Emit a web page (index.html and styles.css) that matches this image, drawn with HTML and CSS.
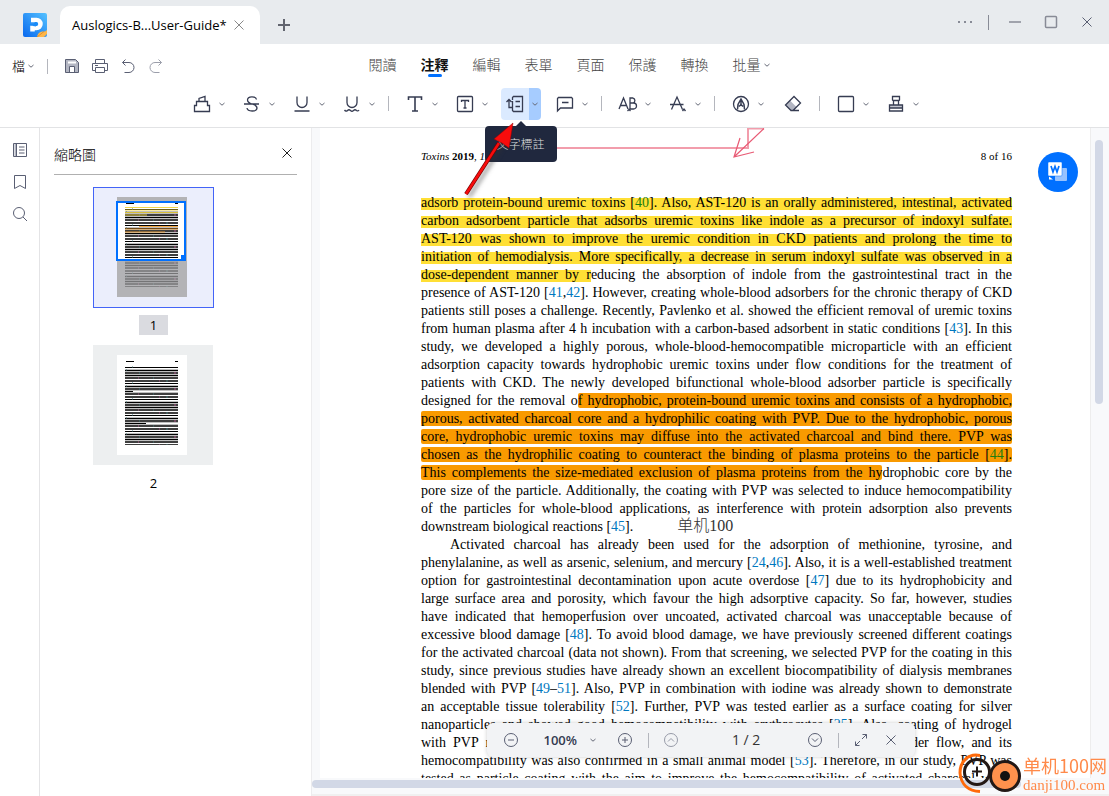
FILE: index.html
```html
<!DOCTYPE html>
<html lang="zh-Hant">
<head>
<meta charset="utf-8">
<title>Auslogics-B...User-Guide*</title>
<link rel="stylesheet" href="styles.css">
</head>
<body>
<svg class="defs" width="0" height="0" aria-hidden="true">
  <defs>
    <symbol id="chev" viewBox="0 0 12 12"><path d="M3.5 5 6 7.2 8.500 5"/></symbol>
    <symbol id="cross" viewBox="0 0 16 16"><path d="M3.500 3.500 12.500 12.500M12.500 3.500 3.500 12.500"/></symbol>
    <pattern id="rows" width="53" height="16" patternUnits="userSpaceOnUse">
      <path d="M0 1h53M0 4h53M0 9.500h53M0 12h53M0 14.500h53" stroke="#000" stroke-width="1.600"/>
      <path d="M0 6.500h53" stroke="#000"/>
      <path d="M7 1h1M20 4h2M33 9h1M46 12h1M39 6h1" stroke="#477"/>
      <path d="M13 4h1M28 12h2M45 1h1" stroke="#a58"/>
    </pattern>
  </defs>
</svg>

<div class="app">
  <header class="titlebar">
    <svg class="logo" viewBox="0 0 24 24">
      <defs><linearGradient id="lg" x1="1" y1="0" x2="0" y2="1"><stop offset="0" stop-color="#55c2ff"/><stop offset="1" stop-color="#0868ee"/></linearGradient></defs>
      <rect width="24" height="24" rx="2" fill="url(#lg)"/>
      <path d="M8 7h5.500a3.800 3.800 0 0 1 0 8H9.500v3.500" fill="none" stroke="#fff" stroke-width="4.500"/>
      <path d="M5 11.500h5l3-2v3.500L10 12.500" fill="#1a8cf8" stroke="#1a8cf8"/>
      <circle cx="13" cy="11" r="2" fill="#1a8cf8"/>
      <path d="M14 24c1-5 4-6 8-5.500L24 17v4l-3 3z" fill="#ffb648"/><path d="M14 24 21 18.500" stroke="#d8852a" stroke-width=".8"/>
    </svg>
    <div class="doc-tab"><span>Auslogics-B...User-Guide*</span><button class="ib" aria-label="Close tab"><svg class="i16 faint"><use href="#cross"/></svg></button></div>
    <button class="ib add" aria-label="New tab"><svg class="i16 bold" viewBox="0 0 16 16"><path d="M8 2v12M2 8h12"/></svg></button>
    <div class="win">
      <button class="ib" aria-label="More"><svg class="i16 fillonly" viewBox="0 0 16 16"><path d="M1 7h2v2H1zM7 7h2v2H7zM13 7h2v2h-2z"/></svg></button>
      <i class="sep"></i>
      <button class="ib" aria-label="Minimize"><svg class="i16 gray" viewBox="0 0 16 16"><path d="M2 8h12"/></svg></button>
      <button class="ib" aria-label="Maximize"><svg class="i16 gray" viewBox="0 0 16 16"><rect x="2.500" y="2.500" width="11" height="11" rx="1"/></svg></button>
      <button class="ib" aria-label="Close"><svg class="i16"><use href="#cross"/></svg></button>
    </div>
  </header>

  <div class="menubar">
    <div class="quick">
      <button class="file">檔<svg class="chev"><use href="#chev"/></svg></button>
      <i class="sep"></i>
      <button class="ib" aria-label="Save"><svg class="i16" viewBox="0 0 16 16"><path d="M1.500 1.500h10l3 3v10h-13z" fill="#b3b6c2"/><path d="M4 4.500h8" stroke="#fff" stroke-width="2"/><path d="M5.500 14V8.500h5V14" fill="#fff"/></svg></button>
      <button class="ib" aria-label="Print"><svg class="i16" viewBox="0 0 16 16"><path d="M3.500 5V1.500h9V5M3.500 12.500H.5v-7h15v7h-3M3.500 9.500h9v5h-9zM3 7.500h3"/></svg></button>
      <button class="ib" aria-label="Undo"><svg class="i16" viewBox="0 0 16 16"><path d="M5.500 1.500 2.500 4.500l3 3M2.500 4.500h6.500a5 5 0 0 1 0 10H4.500"/></svg></button>
      <button class="ib dim" aria-label="Redo"><svg class="i16" viewBox="0 0 16 16"><path d="M10.500 1.500 13.500 4.500l-3 3M13.500 4.500H7a5 5 0 0 0 0 10h4.500"/></svg></button>
    </div>
    <nav class="tabs">
      <button>閱讀</button><button class="active">注釋</button><button>編輯</button><button>表單</button><button>頁面</button><button>保護</button><button>轉換</button><button>批量<svg class="chev"><use href="#chev"/></svg></button>
    </nav>
  </div>

  <div class="toolbar">
    <div class="group">
      <button class="tool" aria-label="Highlight"><svg class="i18" viewBox="0 0 18 18"><path d="M1.500 16.500v-6h2v-4h11v4h2v6zM6 6.500V3.500L12 1.500v5"/></svg><svg class="chev"><use href="#chev"/></svg></button>
      <button class="tool" aria-label="Strikethrough"><svg class="i18" viewBox="0 0 18 18"><path d="M13.500 4.500C13 1 4.500.8 4.500 5 4.500 7 6 8 9 9c4 1.200 5 2.200 5 4 0 4-9.500 4-10 0M1 9h15"/></svg><svg class="chev"><use href="#chev"/></svg></button>
      <button class="tool" aria-label="Underline"><svg class="i18" viewBox="0 0 18 18"><path d="M4 1.500v6a5 5 0 0 0 10 0v-6M1.500 16h15"/></svg><svg class="chev"><use href="#chev"/></svg></button>
      <button class="tool" aria-label="Squiggly underline"><svg class="i18" viewBox="0 0 18 18"><path d="M4 1.500v6a5 5 0 0 0 10 0v-6M1.500 15q1.500 2 3 .5 1.500-1.500 3 0 1.500 1.500 3 0 1.500-1.500 3 0 1.500 1 2.500-.5"/></svg><svg class="chev"><use href="#chev"/></svg></button>
    </div>
    <i class="sep"></i>
    <div class="group">
      <button class="tool" aria-label="Typewriter"><svg class="i18" viewBox="0 0 18 18"><path d="M2.500 5V2h13v3M9 2v14M6 16h6" stroke-width="1.600"/></svg><svg class="chev"><use href="#chev"/></svg></button>
      <button class="tool" aria-label="Text box"><svg class="i18" viewBox="0 0 18 18"><rect x="1.500" y="1.500" width="15" height="15" rx="1"/><path d="M5.500 7V5.500h7V7M9 5.500V13M7.500 13h3"/></svg><svg class="chev"><use href="#chev"/></svg></button>
      <div class="anchor">
        <button class="tool selected" aria-label="Text callout"><svg class="i18" viewBox="0 0 18 18"><path d="M.5 7 3 4.500 5.500 7M3 4.500v8h3M6.500 5V2.500l1-1h9v15h-9l-1-1V6M9.500 6.500H14M9.500 11.500H14"/></svg><svg class="chev"><use href="#chev"/></svg></button>
        <div class="tooltip" role="tooltip">文字標註</div>
        <svg class="pointer" viewBox="0 0 60 90" aria-hidden="true"><path d="m9 82 36-56" stroke="#333" stroke-opacity=".45" stroke-width="4" filter="blur(2px)"/><path d="m6 79 33-51" stroke="#700" stroke-width="4"/><path d="m6 79 33-51" stroke="#f80c0c" stroke-width="2.500"/><path d="M53 8 49 33 42 28 34 24z" fill="#f80c0c" stroke="#900" stroke-width=".5"/></svg>
      </div>
      <button class="tool" aria-label="Note"><svg class="i18" viewBox="0 0 18 18"><path d="M1.500 16V3.500l1-1h13l1 1v9.500h-12zM6 7.500h6.500"/></svg><svg class="chev"><use href="#chev"/></svg></button>
    </div>
    <i class="sep"></i>
    <div class="group">
      <button class="tool" aria-label="Replace text"><svg class="i20" viewBox="0 0 20 18"><path d="m1 14 4.500-11L10 14M2.500 10.500h6M12 3h3a2.600 2.600 0 0 1 0 5h-3zM12 8h3.500a3 3 0 0 1 0 6H12zM9.500 16l1.500-1.500L12.500 16"/></svg><svg class="chev"><use href="#chev"/></svg></button>
      <button class="tool" aria-label="Insert text"><svg class="i18" viewBox="0 0 18 18"><path d="M2.500 14.500 8 2l5.500 12.500M1 9.500h13.500M13.500 16l1.500-2 1.500 2"/></svg><svg class="chev"><use href="#chev"/></svg></button>
    </div>
    <i class="sep"></i>
    <div class="group wide">
      <button class="tool" aria-label="Ink"><svg class="i18" viewBox="0 0 18 18"><circle cx="9" cy="9" r="7.500"/><path d="M5.500 14.500 6 9.500 9 4l3 5.500.500 5M9 5v5M7 11.500l2-2 2 2" stroke-width="1.500"/></svg><svg class="chev"><use href="#chev"/></svg></button>
      <button class="tool single" aria-label="Eraser"><svg class="i18" viewBox="0 0 18 18"><path d="M6 5.500 12.500 12 9 15.500H6.500L1.500 10z" fill="#b3b6c2" stroke="none"/><path d="M7 15.500 1.500 10 10 1.500 16.500 8 9 15.500M6.500 15.500H15"/></svg></button>
    </div>
    <i class="sep"></i>
    <div class="group">
      <button class="tool" aria-label="Rectangle"><svg class="i18" viewBox="0 0 18 18"><rect x="1.500" y="1.500" width="15" height="15" rx="1"/></svg><svg class="chev"><use href="#chev"/></svg></button>
      <button class="tool" aria-label="Stamp"><svg class="i18" viewBox="0 0 18 18"><path d="M2 10h14v3H2z" fill="#c3c5cf" stroke="none"/><path d="M2.500 16v-6h13v6zM6.500 9.500V6l-1-1V1.500h7V5l-1 1v3.500M6 5.500h6M2.500 13h13"/></svg><svg class="chev"><use href="#chev"/></svg></button>
    </div>
  </div>

  <main class="body">
    <aside class="rail">
      <button class="ib" aria-label="Thumbnails"><svg class="i16" viewBox="0 0 16 16"><path d="M3.500 2v12" stroke="#b3b6c2" stroke-width="2"/><path d="M1.500 1.500h13v13h-13zM4.500 2v12M7 5h5.500M7 8h5.500M7 11h5.500"/></svg></button>
      <button class="ib" aria-label="Bookmarks"><svg class="i16" viewBox="0 0 16 16"><path d="M2.500 1.500h11v13L8 11.500l-5.500 3z"/></svg></button>
      <button class="ib" aria-label="Search"><svg class="i16" viewBox="0 0 16 16"><circle cx="7" cy="7" r="5.500"/><path d="m11 11 4 4"/></svg></button>
    </aside>

    <section class="thumbs">
      <div class="thumbs-head"><h2>縮略圖</h2><button class="ib" aria-label="Close panel"><svg class="i16 dark"><use href="#cross"/></svg></button></div>
      <ol class="thumb-list">
        <li class="current">
          <svg class="thumb" viewBox="0 0 121 121">
            <rect x=".5" y=".5" width="120" height="120" fill="#ebeefc" stroke="#4364f7"/>
            <rect x="24" y="10" width="70" height="100" fill="#b3b3b6"/>
            <rect x="24" y="15" width="68" height="58" fill="#fff"/>
            <path d="M33 16.500h8M82 16.500h3" stroke="#000" stroke-width="1.200"/>
            <rect x="32" y="21" width="53" height="50" fill="url(#rows)"/>
            <path d="M32 20.500h53M32 23h53M32 25.500h53M32 28h22" stroke="#efd23a" stroke-width=".9"/>
            <path d="M46 39.500h39M32 42h53M32 45h40" stroke="#f5a030" stroke-width=".9"/>
            <rect x="32" y="74" width="53" height="26" fill="url(#rows)" opacity=".35"/>
            <rect x="24" y="15" width="68" height="58" fill="none" stroke="#0070ff" stroke-width="2"/>
            <path d="M88 68h4v5h-4z" fill="#0070ff"/>
          </svg>
          <span>1</span>
        </li>
        <li>
          <svg class="thumb" viewBox="0 0 121 121">
            <rect width="120" height="120" fill="#edeff0"/>
            <rect x="24" y="10" width="70" height="100" fill="#fff"/>
            <path d="M33 16.500h8M82 16.500h3" stroke="#000" stroke-width="1.200"/>
            <rect x="32" y="21" width="53" height="79" fill="url(#rows)"/>
            <path d="M40 46.500h45M53 78.500h32" stroke="#fff"/>
          </svg>
          <span>2</span>
        </li>
      </ol>
    </section>

    <section class="viewer">
      <article class="page">
        <div class="running"><span><em>Toxins</em> <b>2019</b>, <em>11</em></span><span>8 of 16</span></div>
        <svg class="ink" viewBox="0 0 260 34" aria-hidden="true"><path d="M0 20h242V.5h16" stroke="#f29dac" stroke-width="2"/><path d="M258 .5 228 29M234 10l-6 19 20-5" stroke="#e85a74" stroke-width="1.200"/></svg>
        <p><mark>adsorb protein-bound uremic toxins [<a class="g">40</a>]. Also, AST-120 is an orally administered, intestinal, activated</mark></p>
        <p><mark>carbon adsorbent particle that adsorbs uremic toxins like indole as a precursor of indoxyl sulfate.</mark></p>
        <p><mark>AST-120 was shown to improve the uremic condition in CKD patients and prolong the time to</mark></p>
        <p><mark>initiation of hemodialysis. More specifically, a decrease in serum indoxyl sulfate was observed in a</mark></p>
        <p><mark>dose-dependent manner by r</mark>educing the absorption of indole from the gastrointestinal tract in the</p>
        <p>presence of AST-120 [<a>41</a>,<a>42</a>]. However, creating whole-blood adsorbers for the chronic therapy of CKD</p>
        <p>patients still poses a challenge. Recently, Pavlenko et al. showed the efficient removal of uremic toxins</p>
        <p>from human plasma after 4 h incubation with a carbon-based adsorbent in static conditions [<a>43</a>]. In this</p>
        <p>study, we developed a highly porous, whole-blood-hemocompatible microparticle with an efficient</p>
        <p>adsorption capacity towards hydrophobic uremic toxins under flow conditions for the treatment of</p>
        <p>patients with CKD. The newly developed bifunctional whole-blood adsorber particle is specifically</p>
        <p>designed for the removal o<mark class="o">f hydrophobic, protein-bound uremic toxins and consists of a hydrophobic,</mark></p>
        <p><mark class="o">porous, activated charcoal core and a hydrophilic coating with PVP. Due to the hydrophobic, porous</mark></p>
        <p><mark class="o">core, hydrophobic uremic toxins may diffuse into the activated charcoal and bind there. PVP was</mark></p>
        <p><mark class="o">chosen as the hydrophilic coating to counteract the binding of plasma proteins to the particle [<a class="g">44</a>].</mark></p>
        <p><mark class="o">This complements the size-mediated exclusion of plasma proteins from the hy</mark>drophobic core by the</p>
        <p>pore size of the particle. Additionally, the coating with PVP was selected to induce hemocompatibility</p>
        <p>of the particles for whole-blood applications, as interference with protein adsorption also prevents</p>
        <p class="last"><span>downstream biological reactions [<a>45</a>].</span><span class="typed">单机100</span></p>
        <p class="indent">Activated charcoal has already been used for the adsorption of methionine, tyrosine, and</p>
        <p>phenylalanine, as well as arsenic, selenium, and mercury [<a>24</a>,<a>46</a>]. Also, it is a well-established treatment</p>
        <p>option for gastrointestinal decontamination upon acute overdose [<a>47</a>] due to its hydrophobicity and</p>
        <p>large surface area and porosity, which favour the high adsorptive capacity. So far, however, studies</p>
        <p>have indicated that hemoperfusion over uncoated, activated charcoal was unacceptable because of</p>
        <p>excessive blood damage [<a>48</a>]. To avoid blood damage, we have previously screened different coatings</p>
        <p>for the activated charcoal (data not shown). From that screening, we selected PVP for the coating in this</p>
        <p>study, since previous studies have already shown an excellent biocompatibility of dialysis membranes</p>
        <p>blended with PVP [<a>49</a>–<a>51</a>]. Also, PVP in combination with iodine was already shown to demonstrate</p>
        <p>an acceptable tissue tolerability [<a>52</a>]. Further, PVP was tested earlier as a surface coating for silver</p>
        <p>nanoparticles and showed good hemocompatibility with erythrocytes [<a>25</a>]. Also, coating of hydrogel</p>
        <p>with PVP resulted in an improved blood compatibility of the coated surfaces under flow, and its</p>
        <p>hemocompatibility was also confirmed in a small animal model [<a>53</a>]. Therefore, in our study, PVP was</p>
        <p>tested as particle coating with the aim to improve the hemocompatibility of activated charcoal while</p>
      </article>
      <div class="vscroll"><i></i></div>
      <div class="hscroll"><i></i></div>
      <button class="word" aria-label="Convert to Word"><svg viewBox="0 0 20 20"><rect x="7" y="6" width="12" height="13" rx="1" fill="#96c2ff"/><path d="M1 14.500v3h4z" fill="#fff"/><rect width="14" height="14" rx="1" fill="#fff" stroke="#0070ff" stroke-width=".5"/><path d="m3 4 2 6 2-5.500L9 10l2-6" fill="none" stroke="#0070ff" stroke-width="1.700"/></svg></button>
      <div class="pager">
        <button class="ib" aria-label="Zoom out"><svg class="i16" viewBox="0 0 16 16"><circle cx="8" cy="8" r="6.500"/><path d="M5 8h6"/></svg></button>
        <button class="zoom">100%<svg class="chev"><use href="#chev"/></svg></button>
        <button class="ib" aria-label="Zoom in"><svg class="i16" viewBox="0 0 16 16"><circle cx="8" cy="8" r="6.500"/><path d="M5 8h6M8 5v6"/></svg></button>
        <i class="sep"></i>
        <button class="ib dim" aria-label="Previous page"><svg class="i16" viewBox="0 0 16 16"><circle cx="8" cy="8" r="6.500"/><path d="m5 9.500 3-3 3 3"/></svg></button>
        <span class="count">1 / 2</span>
        <button class="ib" aria-label="Next page"><svg class="i16" viewBox="0 0 16 16"><circle cx="8" cy="8" r="6.500"/><path d="m5 6.500 3 3 3-3"/></svg></button>
        <i class="sep"></i>
        <button class="ib" aria-label="Fit"><svg class="i16" viewBox="0 0 16 16"><path d="M9.500 2.500h4v4M13.500 2.500 9 7M6.500 13.500h-4v-4M2.500 13.500 7 9"/></svg></button>
        <button class="ib" aria-label="Hide"><svg class="i16"><use href="#cross"/></svg></button>
      </div>
    </section>
  </main>
</div>

<div class="brand">
  <svg viewBox="0 0 64 42" aria-hidden="true" fill="none">
    <path d="M22 2.500C10 0 2 9 2 20c1 12 9 18 20 18.500" stroke="#ff6a0a" stroke-width="3"/>
    <circle cx="19" cy="19" r="12.500" stroke="#231815" stroke-width="3"/><path d="M19 13.500v10M14 18.500h10" stroke="#231815" stroke-width="2"/>
    <circle cx="47" cy="23" r="14.500" fill="#ff914d" stroke="#231815" stroke-width="3"/><circle cx="47" cy="23" r="5" fill="#111"/>
  </svg>
  <div><strong>单机100网</strong><span>danji100.com</span></div>
</div>
</body>
</html>
```
FILE: styles.css
```css
* { box-sizing: border-box; }
body { margin: 0; font: 13px/18px "Open Sans", "Noto Sans CJK TC", sans-serif; color: #222; background: #fff; overflow: hidden; }
h2, p, ol { margin: 0; padding: 0; }
button { font: inherit; color: inherit; background: none; border: 0; padding: 0; display: flex; align-items: center; justify-content: center; flex: none; }
svg { fill: none; stroke-width: 1; flex: none; display: block; }
.defs { position: absolute; }
.i16 { width: 16px; height: 16px; stroke: #5a5f73; }
.i18 { width: 18px; height: 18px; stroke: #363c52; stroke-width: 1.3; }
.i20 { width: 20px; height: 18px; stroke: #363c52; stroke-width: 1.3; }
.chev { width: 12px; height: 12px; stroke: #666a78; }
.ib { width: 16px; height: 16px; }
.dim { opacity: .6; }
.faint { stroke: #888; }
.dark { stroke: #222; }
.gray { stroke: #888b96; stroke-width: 1.5; }
.bold { stroke: #62656f; stroke-width: 2; }
.fillonly { fill: #888b96; stroke: none; }
.sep { width: 1px; height: 15px; background: #b4b6bd; flex: none; }

.app { height: 100vh; display: flex; flex-direction: column; }
.titlebar { height: 44px; background: #e8ebee; display: flex; align-items: center; padding: 6px 14px 0 23px; flex: none; }
.logo { width: 24px; height: 24px; margin-right: 13px; }
.doc-tab { width: 200px; height: 38px; background: #fff; border-radius: 10px 10px 0 0; display: flex; align-items: center; justify-content: space-between; padding: 0 13px 0 12px; color: #000; }
.add { margin-left: 16px; }
.win { margin-left: auto; display: flex; align-items: center; gap: 20px; height: 100%; padding-bottom: 6px; }
.win .sep { margin: 0 -2px 0 -5px; background: #888b96; }

.menubar { height: 44px; display: grid; grid-template-columns: 1fr auto 1fr; align-items: center; flex: none; }
.quick { display: flex; align-items: center; padding-left: 12px; gap: 12px; }
.quick .sep { margin-left: -2px; margin-right: 4px; }
.file { font-size: 13px; font-weight: 300; color: #000; }
.tabs { display: flex; gap: 24px; padding-left: 32px; font-size: 14px; line-height: 20px; padding-bottom: 2px; color: #444; font-weight: 300; }
.tabs .active { color: #111; font-weight: 700; position: relative; }
.tabs .active::after { content: ""; position: absolute; width: 14px; height: 3px; border-radius: 2px; background: #0070ff; bottom: -2px; left: 7px; }

.toolbar { height: 40px; display: flex; align-items: flex-start; justify-content: center; gap: 10px; flex: none; border-bottom: 1px solid #e2e3e5; }
.toolbar > .sep { margin: 8px 2px 0 0; }
.group { display: flex; gap: 10px; }
.group.wide { gap: 12px; padding-right: 2px; }
.tool { width: 40px; height: 32px; justify-content: flex-start; padding-left: 5px; border-radius: 4px; gap: 5px; }
.tool .i20 { margin: 0 -1px; }
.tool.single { width: 28px; }
.selected { background: linear-gradient(90deg, #dbeaff 28px, #a6ccff 28px); }
.anchor { position: relative; }
.tooltip { position: absolute; z-index: 3; left: -16px; top: 38px; width: 72px; height: 36px; border-radius: 4px; background: #20283e; color: #ddd; font-size: 12px; font-weight: 300; line-height: 36px; padding-top: 1px; text-align: center; }
.tooltip::before { content: ""; position: absolute; left: 30px; top: -5px; border: 6px solid transparent; border-top: 0; border-bottom-color: #20283e; }
.pointer { position: absolute; z-index: 4; width: 60px; height: 90px; left: -41px; top: 27px; }

.body { flex: 1; min-height: 0; display: flex; }
.rail { width: 40px; border-right: 1px solid #e4e4e6; display: flex; flex-direction: column; align-items: center; gap: 16px; padding-top: 14px; flex: none; }
.thumbs { width: 271px; padding: 0 14px; flex: none; }
.thumbs-head { height: 47px; border-bottom: 1px solid #b0b0b0; display: flex; align-items: center; justify-content: space-between; padding: 4px 2px 0 0; }
.thumbs-head h2 { font-size: 14px; font-weight: 300; line-height: 20px; padding-top: 4px; color: #000; }
.thumb-list { list-style: none; padding: 12px 0 0 39px; width: 160px; }
.thumb-list li { display: flex; flex-direction: column; align-items: center; margin-bottom: 10px; }
.thumb { width: 121px; height: 121px; }
.thumb-list span { margin-top: 7px; width: 29px; height: 20px; line-height: 20px; text-align: center; color: #000; }
.current span { background: #dadbe0; }

.viewer { position: relative; flex: 1; min-width: 0; border-left: 1px solid #ececee; background: #f8f9fb; display: grid; grid-template-columns: 1fr 18px; grid-template-rows: 1fr 18px; }
.page { position: relative; min-width: 0; min-height: 0; margin-left: 8px; overflow: hidden; background: #fff; padding: 19px 78px 0 101px; font: 14px/18px "Liberation Serif", "Noto Sans CJK SC", serif; color: #000; border-right: 1px solid #ededed; }
.running { display: flex; justify-content: space-between; font-size: 11px; margin-bottom: 29px; }
.page p { text-align: justify; text-align-last: justify; white-space: nowrap; }
.page .indent { padding-left: 29px; }
.page p.last { display: flex; gap: 44px; height: 18px; }
.typed { color: #333; font-size: 16px; font-weight: 300; line-height: 16px; }
.page a { color: #0078c0; }
.page a.g { color: #1f7d10; }
mark { color: inherit; background: linear-gradient(#ffdf35, #ffdf35) 0 3px / 100% 12px no-repeat; }
mark.o { background: #f99a00; border-radius: 2px; }
.ink { position: absolute; left: 186px; top: 0; width: 260px; height: 34px; }
.vscroll { padding: 12px 0 0 4px; }
.vscroll i { display: block; width: 8px; height: 264px; border-radius: 4px; background: #d2d8e6; }
.hscroll { grid-column: 1 / 3; padding-top: 2px; border-bottom: 2px solid #f0f0f0; }
.hscroll i { display: block; width: 89%; height: 8px; border-radius: 4px; background: #d2d8e6; }
.word { position: absolute; right: 31px; top: 24px; width: 40px; height: 40px; border-radius: 50%; background: #0070ff; }
.word svg { width: 20px; height: 20px; }
.pager { position: absolute; left: 175px; bottom: 39px; width: 428px; height: 34px; border-radius: 6px; background: #f2f3f5; box-shadow: 0 0 4px rgba(0,0,0,.2); display: flex; align-items: center; justify-content: space-between; padding: 0 16px; color: #333; }
.zoom { width: 70px; gap: 10px; padding-left: 6px; color: #333a50; font-weight: 600; }
.count { width: 100px; padding-left: 6px; text-align: center; font-size: 14px; }

.brand { position: fixed; z-index: 5; right: 2px; bottom: 1px; display: flex; align-items: center; gap: 1px; color: #ff8a4a; }
.brand svg { width: 64px; height: 42px; }
.brand div { display: flex; flex-direction: column; }
.brand strong { font: 18px/22px "Noto Sans CJK SC", sans-serif; }
.brand span { font: 15px/18px "Liberation Serif", serif; }
```
